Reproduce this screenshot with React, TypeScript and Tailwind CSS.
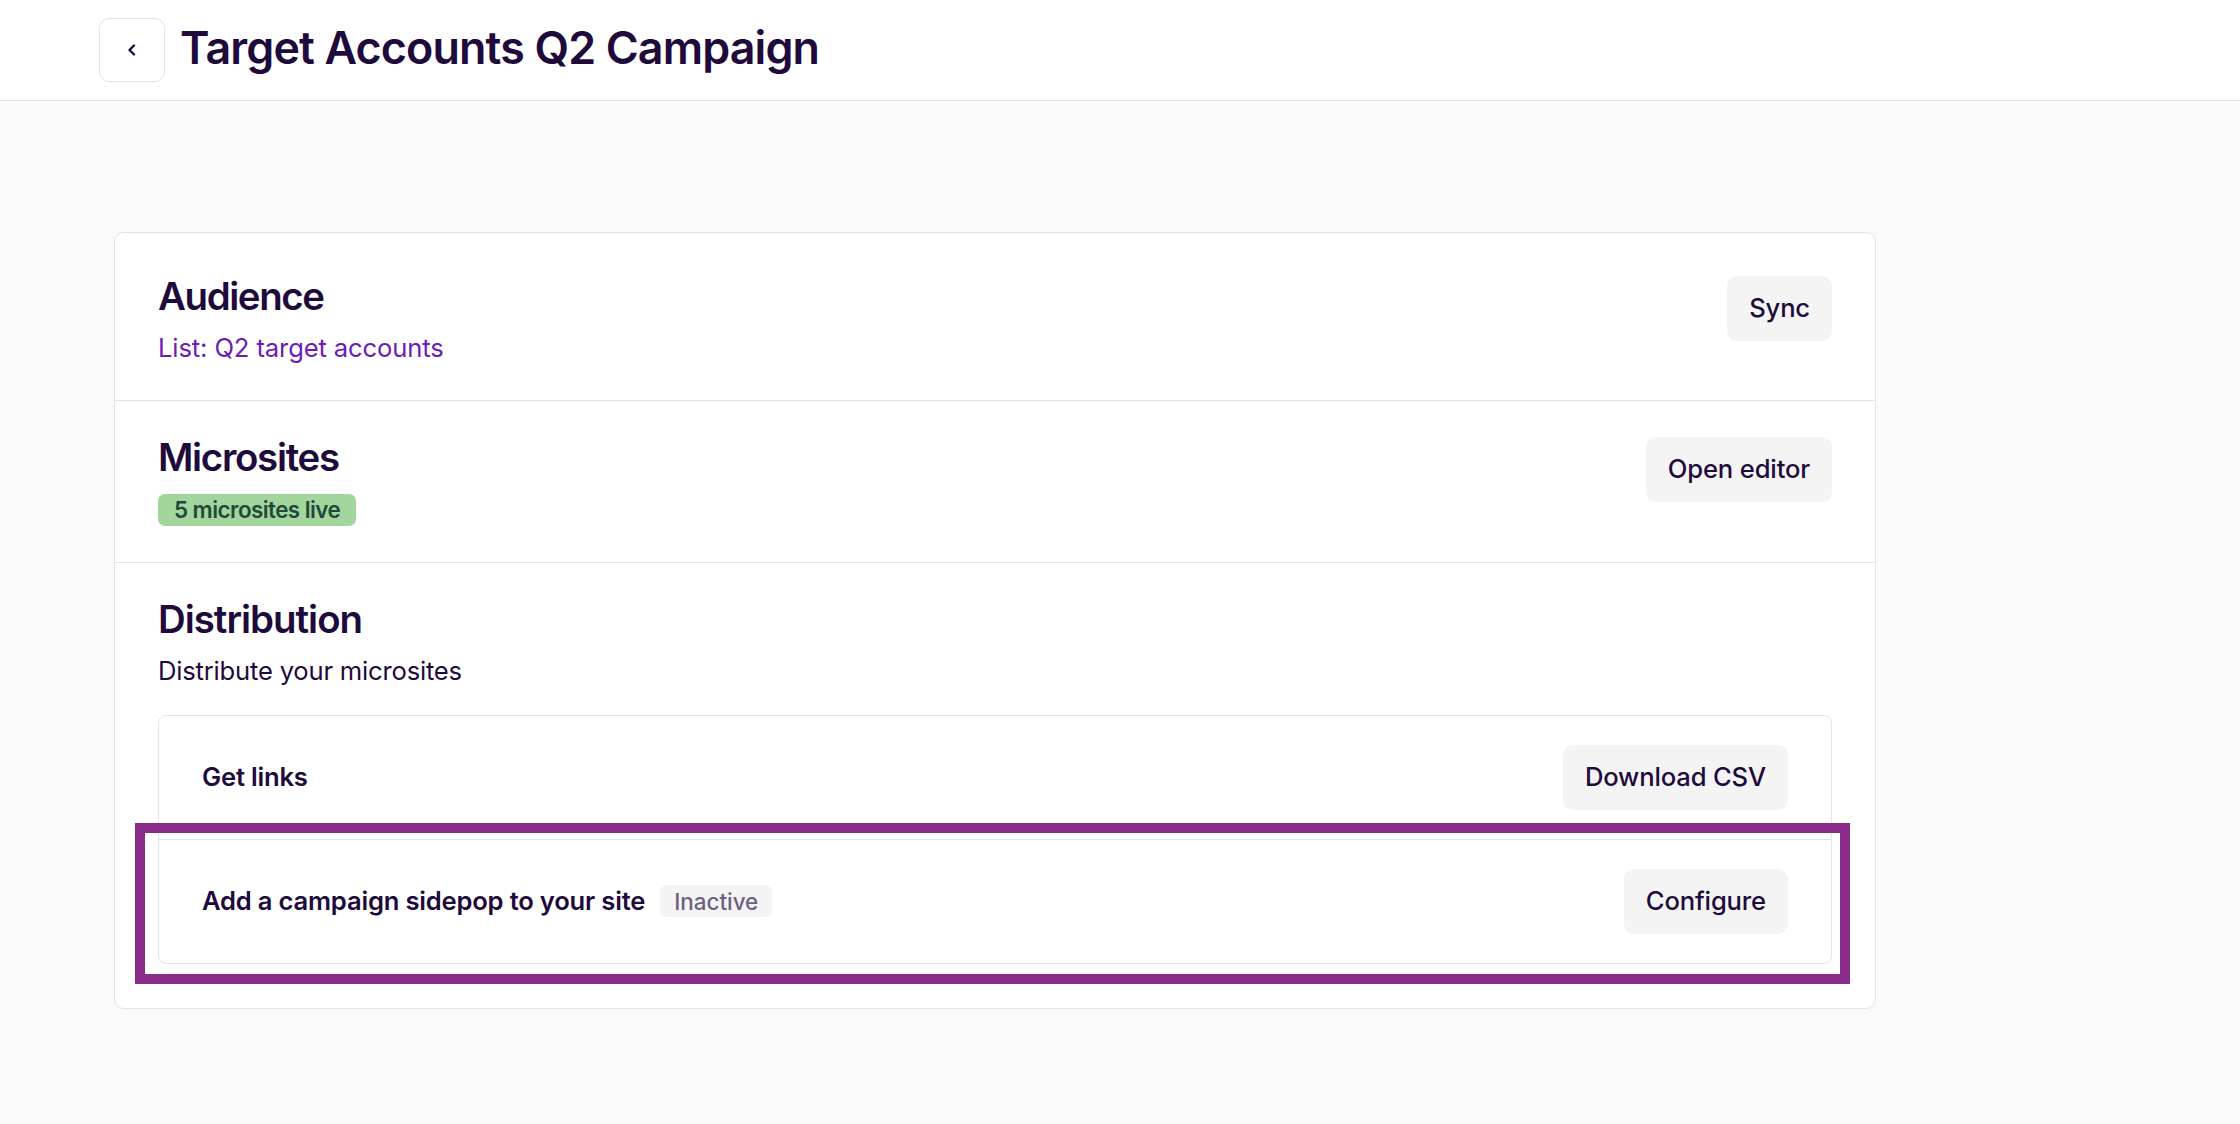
import React from "react";

function Btn({ children }: { children: React.ReactNode }) {
  return (
    <button className="h-[65px] px-[22px] rounded-[10px] bg-[#f4f4f5] text-[25.6px] font-medium tracking-[-0.15px] text-[#1e0b3c] whitespace-nowrap">
      {children}
    </button>
  );
}

export default function App() {
  return (
    <div className="min-h-screen bg-[#fafafa] font-[Inter,sans-serif] text-[#1e0b3c]">
      <header className="h-[101px] bg-white border-b border-[#e4e4e7] flex items-center pl-[99px] gap-[15px]">
        <button className="w-[66px] h-[64px] rounded-[10px] border border-[#e4e4e7] bg-white flex items-center justify-center">
          <svg width="10" height="12" viewBox="0 0 10 12" fill="none">
            <path d="M7 1.5 L2.5 6 L7 10.5" stroke="#1e0b3c" strokeWidth="2.4" strokeLinecap="round" strokeLinejoin="round" />
          </svg>
        </button>
        <h1 className="text-[44.8px] leading-[56px] font-semibold tracking-[-0.85px] mt-[-5px]">Target Accounts Q2 Campaign</h1>
      </header>

      <main className="pt-[131px] pl-[114px]">
        <div className="w-[1762px] bg-white border border-[#e4e4e7] rounded-[10px]">
          {/* Audience */}
          <section className="flex justify-between items-start px-[43px] pt-[39px] pb-[33px] border-b border-[#e4e4e7]">
            <div>
              <h2 className="text-[38.4px] leading-[48px] font-semibold tracking-[-1.4px]">Audience</h2>
              <p className="mt-[9px] text-[25.6px] leading-[38px] tracking-[-0.12px] text-[#6b1db5]">List: Q2 target accounts</p>
            </div>
            <div className="mt-[4px]">
              <Btn>Sync</Btn>
            </div>
          </section>

          {/* Microsites */}
          <section className="flex justify-between items-start px-[43px] pt-[32px] pb-[36px] border-b border-[#e4e4e7]">
            <div>
              <h2 className="text-[38.4px] leading-[48px] font-semibold tracking-[-1.3px]">Microsites</h2>
              <span className="mt-[13px] inline-flex items-center h-[32px] px-[16px] rounded-[7px] bg-[#a3d69c] text-[#1f4a3a] text-[22.4px] font-semibold tracking-[-0.55px]">
                5 microsites live
              </span>
            </div>
            <div className="mt-[4px]">
              <Btn>Open editor</Btn>
            </div>
          </section>

          {/* Distribution */}
          <section className="px-[43px] pt-[32px] pb-[44px]">
            <h2 className="text-[38.4px] leading-[48px] font-semibold tracking-[-1px]">Distribution</h2>
            <p className="mt-[9px] text-[25.6px] leading-[38px] tracking-[-0.2px]">Distribute your microsites</p>

            <div className="mt-[25px] border border-[#e4e4e7] rounded-[8px]">
              <div className="flex items-center justify-between pl-[43px] pr-[43px] py-[29px]">
                <span className="text-[25.6px] font-semibold tracking-[-0.2px]">Get links</span>
                <Btn>Download CSV</Btn>
              </div>
              <div className="relative flex items-center justify-between pl-[43px] pr-[43px] py-[29px] border-t border-[#e4e4e7]">
                <div className="flex items-center gap-[15px]">
                  <span className="text-[25.6px] font-semibold tracking-[-0.2px]">Add a campaign sidepop to your site</span>
                  <span className="inline-flex items-center h-[32px] px-[14px] rounded-[7px] bg-[#f4f4f5] text-[#6b5f82] text-[22.4px] font-medium">
                    Inactive
                  </span>
                </div>
                <Btn>Configure</Btn>
                <div className="absolute -left-[24px] -top-[17px] -right-[19px] -bottom-[21px] border-[10px] border-[#8a2b8a] pointer-events-none" />
              </div>
            </div>
          </section>
        </div>
      </main>
    </div>
  );
}
